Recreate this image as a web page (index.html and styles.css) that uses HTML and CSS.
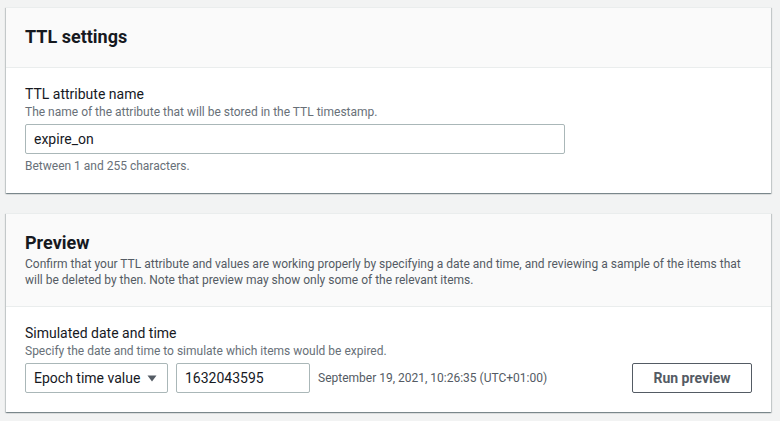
FILE: index.html
```html
<!DOCTYPE html>
<html lang="en">
<head>
<meta charset="utf-8">
<title>TTL settings</title>
<link rel="stylesheet" href="styles.css">
</head>
<body>
<main class="page">
  <section class="card">
    <header class="card-header">
      <h2 class="card-title">TTL settings</h2>
    </header>
    <div class="card-body">
      <div class="field-label">TTL attribute name</div>
      <div class="field-desc">The name of the attribute that will be stored in the TTL timestamp.</div>
      <div class="input input-wide">expire_on</div>
      <div class="field-hint">Between 1 and 255 characters.</div>
    </div>
  </section>

  <section class="card">
    <header class="card-header">
      <h2 class="card-title title-with-desc">Preview</h2>
      <p class="header-desc">Confirm that your TTL attribute and values are working properly by specifying a date and time, and reviewing a sample of the items that will be deleted by then. Note that preview may show only some of the relevant items.</p>
    </header>
    <div class="card-body">
      <div class="field-label">Simulated date and time</div>
      <div class="field-desc">Specify the date and time to simulate which items would be expired.</div>
      <div class="controls">
        <div class="select">
          <span>Epoch time value</span>
          <svg class="caret" width="10" height="7" viewBox="0 0 10 7"><path d="M0.5 0.5 L9.5 0.5 L5 6.5 Z" fill="#545b64"/></svg>
        </div>
        <div class="input input-epoch">1632043595</div>
        <div class="date-text">September 19, 2021, 10:26:35 (UTC+01:00)</div>
        <button class="btn">Run preview</button>
      </div>
    </div>
  </section>
</main>
</body>
</html>
```

FILE: styles.css
```css
* { box-sizing: border-box; }
html, body { margin: 0; padding: 0; }
body {
  background: #f2f3f3;
  font-family: Roboto, "Liberation Sans", Arial, sans-serif;
  color: #16191f;
  width: 780px;
  height: 421px;
  overflow: hidden;
}
.page {
  padding: 7px 9px 0 6px;
  display: flex;
  flex-direction: column;
  gap: 20px;
}
.card {
  background: #ffffff;
  border-top: 1px solid #eaeded;
  box-shadow: 0 1px 1px 0 rgba(0, 28, 36, 0.3), 1px 1px 1px 0 rgba(0, 28, 36, 0.15), -1px 1px 1px 0 rgba(0, 28, 36, 0.15);
}
.card-header {
  background: #fafafa;
  border-bottom: 1px solid #eaeded;
  padding: 18px 19px 19px;
}
.card-title {
  margin: 0;
  font-size: 18px;
  line-height: 22px;
  font-weight: 700;
  color: #16191f;
}
.title-with-desc { margin-bottom: 2px; }
.header-desc {
  margin: 0;
  font-size: 12px;
  line-height: 16px;
  color: #545b64;
  padding-bottom: 0;
}
.card-header:has(.header-desc) { padding-bottom: 18px; }
.card-body {
  padding: 16px 19px 19px;
}
.field-label {
  font-size: 14px;
  line-height: 20px;
  color: #16191f;
}
.field-desc, .field-hint {
  font-size: 12px;
  line-height: 16px;
  color: #687078;
}
.field-hint { margin-top: 4px; }
.input {
  height: 30px;
  border: 1px solid #aab7b8;
  border-radius: 2px;
  background: #ffffff;
  font-size: 14px;
  line-height: 28px;
  padding: 0 8px;
  color: #16191f;
  margin-top: 4px;
}
.input-wide { width: 540px; }
.controls {
  display: flex;
  align-items: center;
  gap: 8px;
  margin-top: 4px;
}
.controls .input { margin-top: 0; }
.select {
  width: 143px;
  height: 30px;
  border: 1px solid #aab7b8;
  border-radius: 2px;
  display: flex;
  align-items: center;
  justify-content: space-between;
  padding: 0 10px 0 8px;
  font-size: 14px;
  color: #16191f;
}
.caret { display: block; }
.input-epoch { width: 134px; }
.date-text {
  font-size: 12px;
  color: #545b64;
  flex: 1;
}
.btn {
  width: 120px;
  height: 30px;
  border: 1px solid #545b64;
  border-radius: 2px;
  background: #ffffff;
  font-family: inherit;
  font-size: 14px;
  font-weight: 700;
  color: #545b64;
  padding: 0;
}
```
